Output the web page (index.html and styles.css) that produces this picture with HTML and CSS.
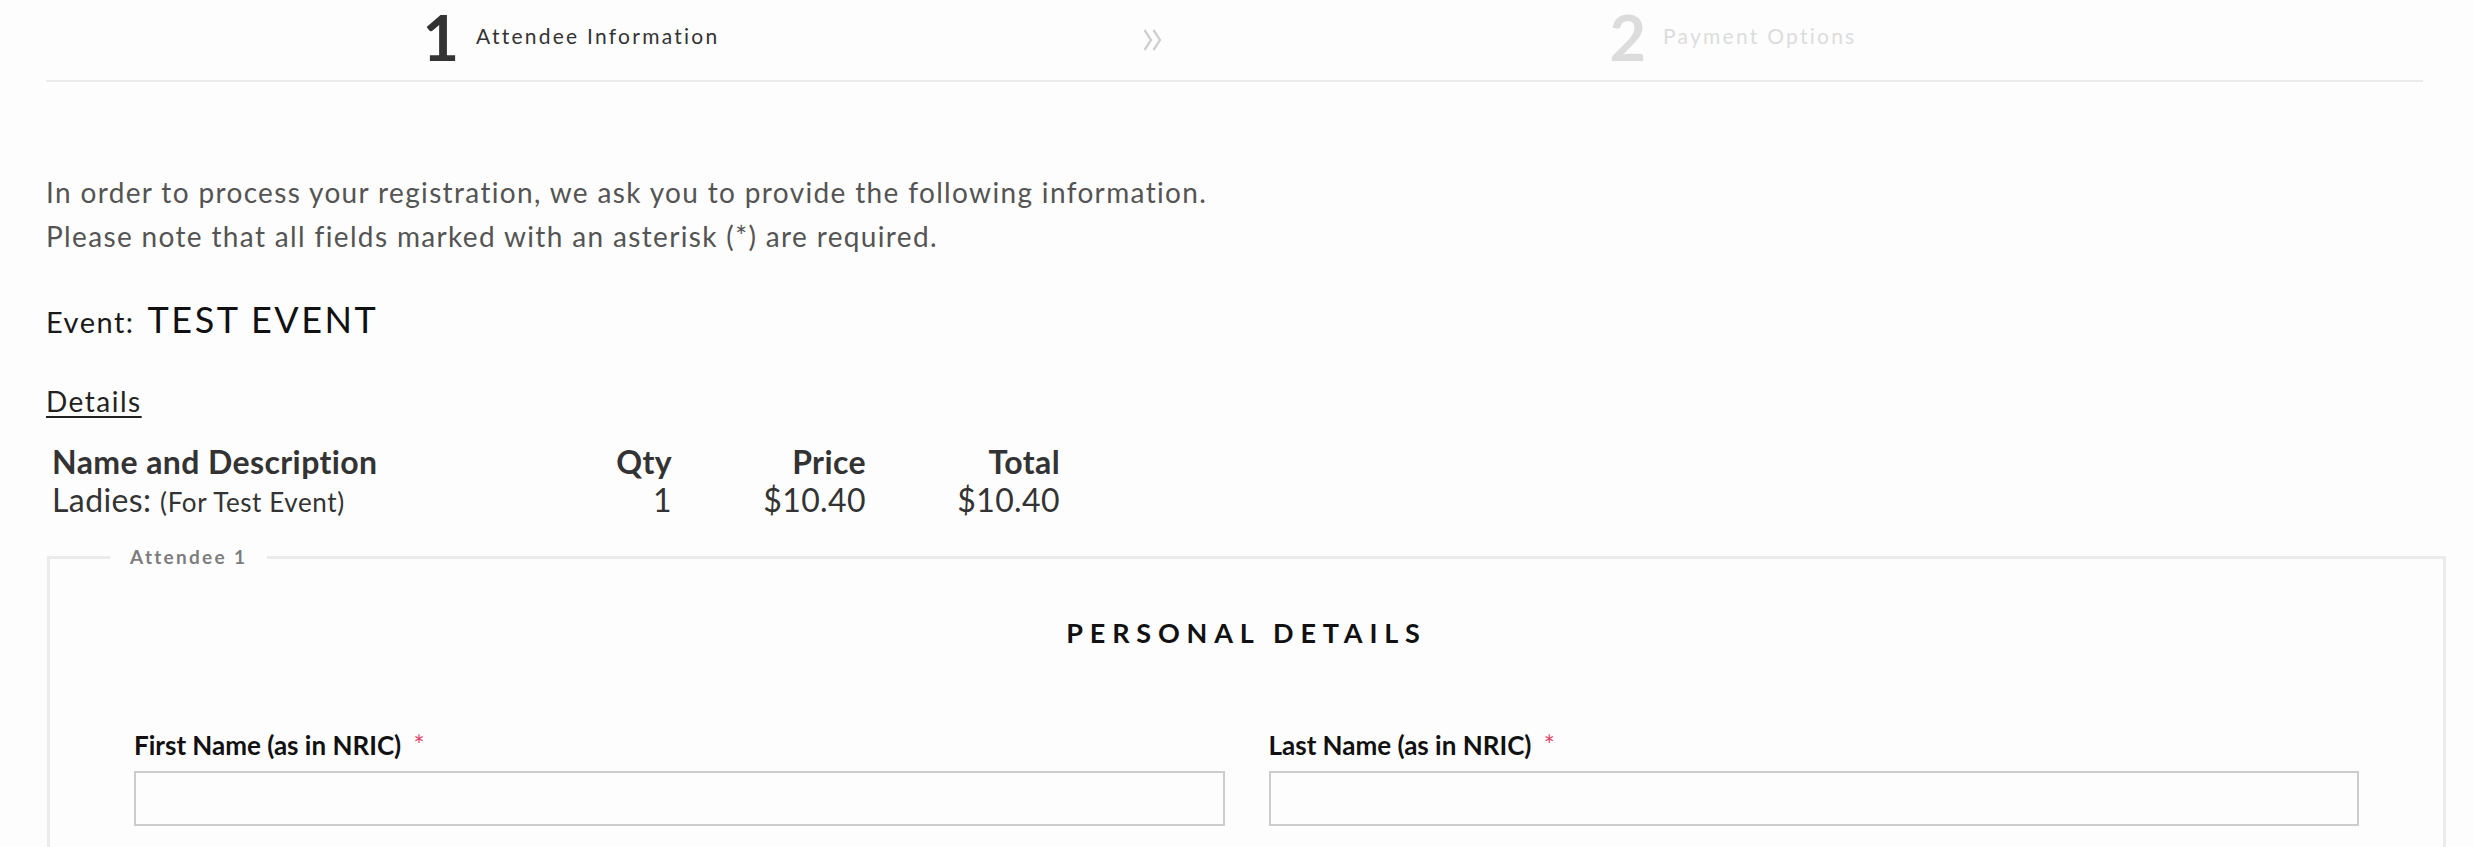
FILE: index.html
```html
<!DOCTYPE html>
<html lang="en">
<head>
<meta charset="utf-8">
<title>Registration - Attendee Information</title>
<link rel="stylesheet" href="styles.css">
</head>
<body>
<div class="page">
  <nav class="steps">
    <div class="step step-active">
      <span class="step-num">1</span>
      <span class="step-label">Attendee Information</span>
    </div>
    <div class="step-sep">
      <svg width="19" height="22" viewBox="0 0 19 22" aria-hidden="true">
        <polyline points="1.5,1 8,11 1.5,21" fill="none" stroke="#cfcfcf" stroke-width="2.3"/>
        <polyline points="10.5,1 17,11 10.5,21" fill="none" stroke="#cfcfcf" stroke-width="2.3"/>
      </svg>
    </div>
    <div class="step step-inactive">
      <span class="step-num">2</span>
      <span class="step-label">Payment Options</span>
    </div>
  </nav>

  <p class="intro">In order to process your registration, we ask you to provide the following information.<br>Please note that all fields marked with an asterisk (*) are required.</p>

  <div class="event">
    <span class="event-label">Event:</span>
    <span class="event-name">TEST EVENT</span>
  </div>

  <div class="details-link">Details</div>

  <div class="ticket-table">
    <div class="cell head">Name and Description</div>
    <div class="cell head num">Qty</div>
    <div class="cell head num">Price</div>
    <div class="cell head num">Total</div>
    <div class="cell"><span class="ticket-name">Ladies:</span> <span class="ticket-desc">(For Test Event)</span></div>
    <div class="cell num">1</div>
    <div class="cell num">$10.40</div>
    <div class="cell num">$10.40</div>
  </div>

  <fieldset class="attendee">
    <legend class="attendee-legend">Attendee 1</legend>
    <div class="attendee-body">
      <h3 class="section-title">PERSONAL DETAILS</h3>
      <div class="field-grid">
        <div class="field">
          <label class="field-label">First Name (as in NRIC) <span class="req">*</span></label>
          <input class="field-input" type="text">
        </div>
        <div class="field">
          <label class="field-label">Last Name (as in NRIC) <span class="req">*</span></label>
          <input class="field-input" type="text">
        </div>
      </div>
    </div>
  </fieldset>
</div>
</body>
</html>
```

FILE: styles.css
```css
html, body {
  margin: 0;
  padding: 0;
  background: #fdfdfd;
}

body {
  font-family: Lato, "Open Sans", "Liberation Sans", sans-serif;
  color: #333;
  overflow: hidden;
}

.page {
  margin: 0 50px 0 46px;
}

/* Steps */
.steps {
  display: grid;
  grid-template-columns: 1050px 112px 1050px;
  align-items: center;
  height: 72px;
  padding-bottom: 8px;
  border-bottom: 2px solid #ebebeb;
}

.step {
  display: flex;
  align-items: center;
  justify-content: center;
  gap: 17px;
}

.step-num {
  font-size: 63px;
  font-weight: 700;
  line-height: 1;
}

.step-label {
  font-size: 21px;
  letter-spacing: 2.25px;
  line-height: 1.2;
}

.step-active .step-num,
.step-active .step-label {
  color: #333;
}

.step-inactive .step-num,
.step-inactive .step-label {
  color: #dcdcdc;
}

.step-sep {
  display: flex;
  justify-content: center;
  padding-top: 8px;
}

/* Intro */
.intro {
  margin: 88px 0 0;
  font-size: 28px;
  line-height: 44px;
  color: #545454;
  letter-spacing: 1.35px;
}

.event {
  display: flex;
  align-items: baseline;
  gap: 13px;
  margin-top: 40px;
  line-height: 1.2;
  color: #1a1a1a;
}

.event-label {
  font-size: 29px;
  letter-spacing: 1.5px;
}

.event-name {
  font-size: 36px;
  letter-spacing: 2.5px;
  color: #111;
}

.details-link {
  margin-top: 44px;
  font-size: 28px;
  line-height: 1.2;
  letter-spacing: 1.5px;
  color: #222;
  text-decoration: underline;
  text-underline-offset: 4px;
  text-decoration-thickness: 2px;
  width: max-content;
}

/* Ticket table */
.ticket-table {
  display: grid;
  grid-template-columns: 438px 194px 194px 194px;
  margin-top: 24px;
  line-height: 38px;
  font-size: 32px;
  letter-spacing: 0.4px;
  color: #333;
}

.cell {
  padding: 0 6px;
  white-space: nowrap;
}

.cell.head {
  font-weight: 700;
}

.cell.num {
  text-align: right;
}

.ticket-desc {
  font-size: 26px;
  letter-spacing: 0.6px;
}

/* Attendee fieldset */
.attendee {
  margin: 25px -23px 0 1px;
  padding: 0;
  border: 3px solid #ebebeb;
  min-width: 0;
}

.attendee-legend {
  margin-left: 60px;
  padding: 0 20px;
  font-size: 19px;
  font-weight: 700;
  letter-spacing: 2.3px;
  color: #7d7d7d;
  line-height: 1.2;
}

.attendee-body {
  padding: 48px 84px 40px;
}

.section-title {
  margin: 0;
  text-align: center;
  font-size: 27px;
  font-weight: 700;
  letter-spacing: 6.8px;
  line-height: 1.2;
  color: #111;
}

.field-grid {
  display: grid;
  grid-template-columns: 1fr 1fr;
  column-gap: 44px;
  margin-top: 81px;
}

.field {
  display: flex;
  flex-direction: column;
}

.field-label {
  font-size: 26px;
  font-weight: 700;
  line-height: 1.2;
  color: #111;
}

.req {
  color: #e0456b;
  font-weight: 400;
  margin-left: 6px;
}

.field-input {
  margin-top: 10px;
  height: 55px;
  box-sizing: border-box;
  border: 2px solid #cccccc;
  background: #fdfdfd;
  font-family: inherit;
  font-size: 24px;
}
```
